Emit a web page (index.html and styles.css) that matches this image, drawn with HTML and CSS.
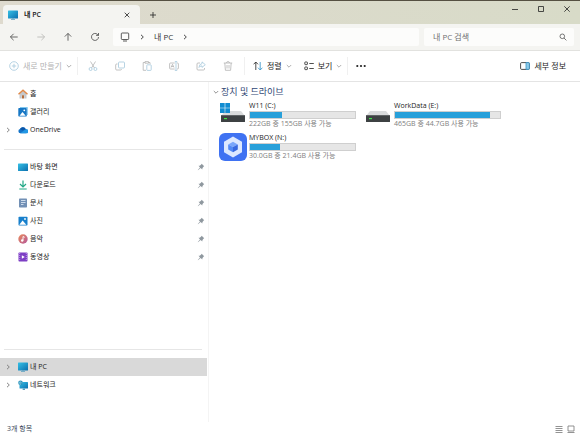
FILE: index.html
```html
<!DOCTYPE html>
<html lang="ko">
<head>
    <meta charset="UTF-8">
    <meta name="viewport" content="width=device-width, initial-scale=1.0">
    <title>내 PC</title>
    <link rel="stylesheet" href="styles.css">
</head>
<body>
    <!-- 공용 아이콘 -->
    <svg class="defs" width="0" height="0" aria-hidden="true">
        <defs>
            <linearGradient id="blue" x1="0" y1="0" x2="1" y2="1">
                <stop offset="0" stop-color="#35c1e6"/>
                <stop offset="1" stop-color="#0b6fae"/>
            </linearGradient>
            <linearGradient id="music" x1="0" y1="0" x2="1" y2="1">
                <stop offset="0" stop-color="#e98a5a"/>
                <stop offset="1" stop-color="#b5589c"/>
            </linearGradient>
            <symbol id="pc" viewBox="0 0 10 10">
                <rect x="0" y="0.500" width="10" height="8" rx="0.600" fill="url(#blue)"/>
                <path d="M4 8.500h2v.5h1v.7H3V9h1z" fill="#5a9fbe"/>
            </symbol>
            <symbol id="right" viewBox="0 0 6 6">
                <path d="M2 .8 4.300 3 2 5.200" fill="none" stroke="currentColor" stroke-width="0.9"/>
            </symbol>
            <symbol id="down" viewBox="0 0 6 6">
                <path d="M.8 2 3 4.200 5.200 2" fill="none" stroke="currentColor" stroke-width="0.8"/>
            </symbol>
            <symbol id="pin" viewBox="0 0 8 8">
                <path d="M4.700.8 7.200 3.300 6.400 3.800 5.400 5.300 5.300 6.500 3.600 5 1 7.300.8 7 3 4.400 1.500 2.800 2.800 2.700 4.200 1.600z" fill="#8f989f"/>
            </symbol>
            <symbol id="drive" viewBox="0 0 26 20">
                <path d="M5 8h16l4 5H1z" fill="#d9dbdc"/>
                <rect x="1" y="12" width="24" height="7" rx="0.5" fill="#3d4143"/>
                <rect x="1" y="12" width="24" height="1" fill="#606466"/>
                <rect x="4" y="15" width="3" height="1.200" fill="#3fe04a"/>
            </symbol>
        </defs>
    </svg>

    <div class="window">
        <!-- 제목 표시줄 -->
        <header class="titlebar">
            <div class="tab">
                <svg class="icon"><use href="#pc"/></svg>
                <span class="tab-title">내 PC</span>
                <button class="tab-close" aria-label="탭 닫기"><svg width="6" height="6" viewBox="0 0 6 6"><path d="M.7.7l4.600 4.600M5.300.7.7 5.300"/></svg></button>
            </div>
            <button class="new-tab" aria-label="새 탭"><svg width="6" height="6" viewBox="0 0 6 6"><path d="M3 0v6M0 3h6"/></svg></button>
            <div class="controls">
                <button aria-label="최소화"><svg width="6" height="6" viewBox="0 0 6 6"><path d="M0 3.500h6"/></svg></button>
                <button aria-label="최대화"><svg width="6" height="6" viewBox="0 0 6 6"><path d="M.5.5h5v5h-5z"/></svg></button>
                <button aria-label="닫기"><svg width="6" height="6" viewBox="0 0 6 6"><path d="M.3.3l5.400 5.400M5.700.3.3 5.700"/></svg></button>
            </div>
        </header>

        <!-- 주소 표시줄 -->
        <div class="navbar">
            <button class="nav-button" aria-label="뒤로"><svg width="10" height="10" viewBox="0 0 10 10"><path d="M8.700 5H1.500M4.600 1.800 1.400 5l3.200 3.200"/></svg></button>
            <button class="nav-button" aria-label="앞으로" disabled><svg width="10" height="10" viewBox="0 0 10 10"><path d="M1.300 5h7.200M5.400 1.800 8.600 5 5.400 8.200"/></svg></button>
            <button class="nav-button" aria-label="위로"><svg width="10" height="10" viewBox="0 0 10 10"><path d="M5 8.700V1.500M1.800 4.600 5 1.400l3.200 3.200"/></svg></button>
            <button class="nav-button" aria-label="새로 고침"><svg width="10" height="10" viewBox="0 0 10 10"><path d="M8.500 5A3.500 3.500 0 1 1 7.300 2.300L8.400 3.300M8.500 1v2.400H6.100"/></svg></button>
            <div class="address">
                <svg width="10" height="10" viewBox="0 0 10 10"><rect x="1.300" y="1" width="7.400" height="6.500" rx="0.800"/><path d="M3 9h4"/></svg>
                <svg class="chevron"><use href="#right"/></svg>
                <a href="#">내 PC</a>
                <svg class="chevron"><use href="#right"/></svg>
            </div>
            <div class="search">
                <input type="text" placeholder="내 PC 검색" aria-label="내 PC 검색">
                <svg width="8" height="8" viewBox="0 0 8 8"><circle cx="3.300" cy="3.300" r="2.300"/><path d="M5 5l2.400 2.400"/></svg>
            </div>
        </div>

        <!-- 명령 모음 -->
        <div class="toolbar">
            <button class="command create" disabled>
                <svg width="10" height="10" viewBox="0 0 10 10"><g class="accent"><circle cx="5" cy="5" r="4.300"/><path d="M5 2.800v4.400M2.800 5h4.400"/></g></svg>
                새로 만들기
                <svg class="chevron"><use href="#down"/></svg>
            </button>
            <span class="divider"></span>
            <div class="tools">
                <button disabled aria-label="잘라내기"><svg width="10" height="10" viewBox="0 0 10 10"><path d="M2.500.5 6.500 7M7.500.5 3.500 7"/><g class="accent"><circle cx="2.600" cy="8" r="1.500"/><circle cx="7.400" cy="8" r="1.500"/></g></svg></button>
                <button disabled aria-label="복사"><svg width="10" height="10" viewBox="0 0 10 10"><rect class="accent" x="3.500" y="1" width="6" height="6" rx="1"/><path d="M2.500 3H1.600Q.7 3 .7 4v4q0 1 1 1h3.800q1 0 1-1"/></svg></button>
                <button disabled aria-label="붙여넣기"><svg width="10" height="10" viewBox="0 0 10 10"><path d="M3 1.500H1.200V9.300H4M6.500 1.500h1.500V3M3 .6h3.500v1.600H3z"/><rect class="accent" x="4.800" y="3.800" width="4.400" height="5.600" rx="0.6"/></svg></button>
                <button disabled aria-label="이름 바꾸기"><svg width="10" height="10" viewBox="0 0 10 10"><path d="M5.700 2H1.500Q.6 2 .6 3v4q0 1 .9 1h4.200M8 2h.5q.9 0 .9 1v4q0 1-.9 1H8M2 6.500 3.500 3.300 5 6.500M2.500 5.500h2"/><path class="accent" d="M7 .6v8.800M5.800.6h2.400M5.800 9.400h2.400"/></svg></button>
                <button disabled aria-label="공유"><svg width="10" height="10" viewBox="0 0 10 10"><path d="M4 2H2Q1 2 1 3v5q0 1 1 1h5.500q1 0 1-1V7"/><path class="accent" d="M6 .9 9.300 3.700 6 6.400V4.900Q4 4.800 3 6.500 3.200 2.900 6 2.600z"/></svg></button>
                <button disabled aria-label="삭제"><svg width="10" height="10" viewBox="0 0 10 10"><path d="M.8 2h8.400M3.500 2q0-1.400 1.500-1.400T6.500 2M1.800 2l.6 7.300h5.200L8.200 2M4 4v3.500M6 4v3.500"/></svg></button>
            </div>
            <span class="divider"></span>
            <button class="command sort">
                <svg width="10" height="10" viewBox="0 0 10 10"><path d="M2.800 9V1.200M.6 3.300 2.800 1 5 3.300"/><path class="accent" d="M7.200 1v7.800M5 6.700 7.200 9 9.400 6.700"/></svg>
                정렬
                <svg class="chevron"><use href="#down"/></svg>
            </button>
            <button class="command view">
                <svg width="10" height="10" viewBox="0 0 10 10"><rect x="0.800" y="1" width="2.600" height="2.600" rx="0.500"/><rect x="0.800" y="6" width="2.600" height="2.600" rx="0.500"/><path d="M5.300 2.500h4.500M5.300 7.500h4.500"/></svg>
                보기
                <svg class="chevron"><use href="#down"/></svg>
            </button>
            <span class="divider"></span>
            <button class="more" aria-label="자세히"><svg width="10" height="10" viewBox="0 0 10 10"><g class="dots"><circle cx="1.300" cy="5" r="1.100"/><circle cx="5" cy="5" r="1.100"/><circle cx="8.700" cy="5" r="1.100"/></g></svg></button>
            <button class="command details">
                <svg width="10" height="10" viewBox="0 0 10 10"><rect x="0.600" y="1.600" width="8.800" height="6.800" rx="1"/><path d="M6 1.600h2.400q1 0 1 1v4.800q0 1-1 1H6z" class="pane"/></svg>
                세부 정보
            </button>
        </div>

        <div class="body">
            <!-- 탐색 창 -->
            <nav class="sidebar">
                <a class="place" href="#">
                    <svg class="icon" viewBox="0 0 10 10"><path d="M1.500 4.500 5 1.600l3.500 2.900V9.500H6.200V6.500H3.800v3H1.500z" fill="#c5c8cc"/><path d="M.5 5.300 5 1.200l4.500 4.100" fill="none" stroke="#e08a4a" stroke-width="1.400"/><path d="M4 6.300h2v3.200H4z" fill="#b56f3f"/></svg>
                    <span>홈</span>
                </a>
                <a class="place" href="#">
                    <svg class="icon" viewBox="0 0 10 10"><path d="M2 .5h7.200q.5 0 .5.5v7" fill="none" stroke="#5fb7ea"/><rect x="0.300" y="1" width="8.500" height="8.500" rx="0.800" fill="#1677c5"/><path d="M1.500 8.800 4.500 5l3.200 3.800z" fill="#fff"/><circle cx="6.300" cy="3.300" r="0.900" fill="#fff"/></svg>
                    <span>갤러리</span>
                </a>
                <a class="place" href="#">
                    <svg class="chevron"><use href="#right"/></svg>
                    <svg class="icon" viewBox="0 0 10 10"><path d="M2.300 8.300A2.200 2.200 0 0 1 2 4 3.200 3.200 0 0 1 7.800 4.300 2 2 0 0 1 8 8.300z" fill="#1473c8"/><path d="M2.300 8.300 7 4.700a2.100 2.100 0 1 1 1 3.600z" fill="#2397e4"/><path d="M2 4a3.200 3.200 0 0 1 5.800.3L4.500 5.500z" fill="#0b56a8"/></svg>
                    <span>OneDrive</span>
                </a>
                <hr>
                <a class="place" href="#">
                    <svg class="icon" viewBox="0 0 10 10"><rect x="0" y="1.500" width="10" height="7.500" rx="0.600" fill="url(#blue)"/></svg>
                    <span>바탕 화면</span>
                    <svg class="pin"><use href="#pin"/></svg>
                </a>
                <a class="place" href="#">
                    <svg class="icon" viewBox="0 0 10 10"><path d="M5 .5v6.300M2 4l3 3 3-3M1.300 9h7.400" fill="none" stroke="#22a886" stroke-width="1.200"/></svg>
                    <span>다운로드</span>
                    <svg class="pin"><use href="#pin"/></svg>
                </a>
                <a class="place" href="#">
                    <svg class="icon" viewBox="0 0 10 10"><rect x="1" y="0.500" width="8" height="9" rx="0.700" fill="#7290b5"/><path d="M3 2.500h4.500M3 4.500h4.500M3 6.500h2.500" stroke="#e4edf7" stroke-width="0.800"/></svg>
                    <span>문서</span>
                    <svg class="pin"><use href="#pin"/></svg>
                </a>
                <a class="place" href="#">
                    <svg class="icon" viewBox="0 0 10 10"><rect x="0.500" y="0.700" width="9" height="8.800" rx="0.800" fill="#1880cc"/><path d="M1.300 8.700 4.600 4.500 8.300 8.700z" fill="#fff"/><circle cx="7" cy="3" r="0.900" fill="#fff"/></svg>
                    <span>사진</span>
                    <svg class="pin"><use href="#pin"/></svg>
                </a>
                <a class="place" href="#">
                    <svg class="icon" viewBox="0 0 10 10"><circle cx="5" cy="5" r="4.700" fill="url(#music)"/><circle cx="4.200" cy="6.500" r="1.200" fill="#fff"/><path d="M5 6.500V2.500l1.700.8" fill="none" stroke="#fff" stroke-width="0.900"/></svg>
                    <span>음악</span>
                    <svg class="pin"><use href="#pin"/></svg>
                </a>
                <a class="place" href="#">
                    <svg class="icon" viewBox="0 0 10 10"><rect x="0.500" y="0.500" width="9" height="9" rx="0.800" fill="#7d3fc4"/><path d="M1.700 1v8M8.300 1v8" stroke="#c59df0" stroke-width="0.900" stroke-dasharray="1 1"/><path d="M3.800 3.200v3.600L6.800 5z" fill="#fff"/></svg>
                    <span>동영상</span>
                    <svg class="pin"><use href="#pin"/></svg>
                </a>
                <hr class="last">
                <a class="place selected" href="#">
                    <svg class="chevron"><use href="#right"/></svg>
                    <svg class="icon"><use href="#pc"/></svg>
                    <span>내 PC</span>
                </a>
                <a class="place" href="#">
                    <svg class="chevron"><use href="#right"/></svg>
                    <svg class="icon" viewBox="0 0 10 10"><rect x="1.500" y="2" width="8.500" height="6.500" rx="0.500" fill="url(#blue)"/><path d="M5 8.500h2V10H4.500z" fill="#5a9fbe"/><circle cx="2.500" cy="2.800" r="2.300" fill="#2b91b9"/><path d="M.5 2.800h4M2.500.6q-1.500 2.200 0 4.400" fill="none" stroke="#a9def0" stroke-width="0.500"/></svg>
                    <span>네트워크</span>
                </a>
            </nav>

            <!-- 드라이브 목록 -->
            <main class="content">
                <h2><svg class="chevron"><use href="#down"/></svg>장치 및 드라이브</h2>
                <div class="drives">
                    <div class="drive">
                        <svg class="drive-icon" viewBox="0 0 26 20"><use href="#drive"/><path d="M0 0h4.700v4.700H0zM5.300 0H10v4.700H5.300zM0 5.300h4.700V10H0zM5.300 5.300H10V10H5.300z" fill="#118cd2"/></svg>
                        <div class="drive-info">
                            <div class="drive-name">W11 (C:)</div>
                            <div class="bar"><div class="bar-fill" style="width: 30%"></div></div>
                            <div class="drive-space">222GB 중 155GB 사용 가능</div>
                        </div>
                    </div>
                    <div class="drive">
                        <svg class="drive-icon" viewBox="0 0 26 20"><use href="#drive"/></svg>
                        <div class="drive-info">
                            <div class="drive-name">WorkData (E:)</div>
                            <div class="bar"><div class="bar-fill" style="width: 90%"></div></div>
                            <div class="drive-space">465GB 중 44.7GB 사용 가능</div>
                        </div>
                    </div>
                    <div class="drive">
                        <svg class="drive-icon mybox" viewBox="0 0 28 28"><rect width="28" height="28" rx="6" fill="#3f72f2"/><path d="M14 3.500 23 8.700v10.600l-9 5.200-9-5.200V8.700z" fill="#dce8ff"/><path d="M14 8.800l4.800 2.600L14 14l-4.800-2.600z" fill="#79a6fb"/><path d="M9.200 11.400 14 14v5.300l-4.800-2.700z" fill="#5289f5"/><path d="M18.800 11.400 14 14v5.300l4.800-2.700z" fill="#3768df"/></svg>
                        <div class="drive-info">
                            <div class="drive-name">MYBOX (N:)</div>
                            <div class="bar"><div class="bar-fill" style="width: 29%"></div></div>
                            <div class="drive-space">30.0GB 중 21.4GB 사용 가능</div>
                        </div>
                    </div>
                </div>
            </main>
        </div>

        <!-- 상태 표시줄 -->
        <footer class="statusbar">
            <span>3개 항목</span>
            <div class="layouts">
                <button aria-label="자세히 보기"><svg width="8" height="8" viewBox="0 0 8 8"><path d="M.5 1.500h7M.5 3.500h7M.5 5.500h7M.5 7.500h7"/></svg></button>
                <button aria-label="큰 아이콘"><svg width="8" height="8" viewBox="0 0 8 8"><path d="M1 1h6v5H1zM.5 7.500h7"/></svg></button>
            </div>
        </footer>
    </div>
</body>
</html>
```
FILE: styles.css
```css
/* 전체 스타일 */
* {
    box-sizing: border-box;
}

body {
    margin: 0;
    font-family: "Open Sans", "Noto Sans CJK KR", sans-serif;
    font-size: 7px;
    line-height: 10px;
    color: #222;
    background-color: #fff;
}

button {
    display: flex;
    align-items: center;
    justify-content: center;
    padding: 0;
    border: none;
    background: none;
    font: inherit;
    color: inherit;
}

a {
    color: inherit;
    text-decoration: none;
}

svg {
    flex: none;
    fill: none;
    stroke: currentColor;
    stroke-width: 0.8;
}

symbol, .icon, .drive-icon, .pin {
    stroke: none;
}

.defs {
    position: absolute;
}

.icon {
    width: 10px;
    height: 10px;
}

.chevron {
    width: 6px;
    height: 6px;
}

.window {
    display: flex;
    flex-direction: column;
    min-height: 100vh;
}

/* 제목 표시줄 */
.titlebar {
    display: flex;
    height: 24px;
    border-top: 1px solid #555042;
    background: linear-gradient(to right, #dedace, #d8dbc8);
}

.tab {
    display: flex;
    align-items: center;
    width: 137px;
    margin: 4px 0 0 3px;
    padding: 0 9px 0 5px;
    border-radius: 4px 4px 0 0;
    background-color: #f4f4f1;
}

.tab-title {
    flex: 1;
    margin-left: 6px;
    font-weight: 600;
}

.tab-close {
    width: 8px;
    height: 8px;
}

.new-tab {
    width: 25px;
    padding-top: 4px;
}

.controls {
    display: flex;
    height: 16px;
    margin-left: auto;
}

.controls button {
    width: 26px;
}

/* 주소 표시줄 */
.navbar {
    display: flex;
    align-items: center;
    height: 27px;
    padding: 0 6px 0 0;
    border-bottom: 1px solid #e2e2df;
    background-color: #f4f4f1;
    font-size: 8px;
}

.nav-button {
    width: 27px;
    height: 18px;
    color: #444;
}

.nav-button:disabled {
    color: #b5b5b3;
}

.address, .search {
    display: flex;
    align-items: center;
    height: 18px;
    border-radius: 2px;
    background-color: #fcfcfb;
}

.address {
    flex: 1;
    gap: 9px;
    margin: 0 5px;
    padding-left: 7px;
    color: #333;
}

.search {
    width: 150px;
    padding: 0 7px 0 9px;
    color: #555;
}

.search input {
    flex: 1;
    min-width: 0;
    padding: 0;
    border: none;
    outline: none;
    background: none;
    font: inherit;
}

.search input::placeholder {
    color: #707070;
}

/* 명령 모음 */
.toolbar {
    display: flex;
    align-items: center;
    height: 31px;
    padding: 0 14px 0 9px;
    border-bottom: 1px solid #e4e4e4;
    font-size: 8px;
}

.command {
    gap: 4px;
    height: 18px;
}

.command .chevron {
    color: #999;
}

.create {
    margin-right: 5px;
}

.toolbar button:disabled {
    color: #b2b2b2;
}

.accent {
    stroke: #2f8fc8;
}

button:disabled .accent {
    stroke: #a5c8dc;
}

.divider {
    width: 1px;
    height: 18px;
    background-color: #f0f0f0;
}

.tools {
    display: flex;
    margin: 0 2px;
}

.tools button {
    width: 27px;
    height: 18px;
}

.sort {
    margin: 0 12px 0 8px;
}

.view {
    margin-right: 5px;
}

.more {
    margin-left: 8px;
}

.dots {
    fill: #222;
    stroke: none;
}

.details {
    margin-left: auto;
}

.pane {
    fill: #8ccbea;
    stroke: #3b94c4;
}

/* 탐색 창 */
.body {
    display: flex;
    flex: 1;
}

.sidebar {
    display: flex;
    flex-direction: column;
    width: 209px;
    padding: 3px 1px 28px 0;
    border-right: 1px solid #f4f4f4;
}

.place {
    display: grid;
    grid-template-columns: 11px 10px 1fr 8px;
    align-items: center;
    column-gap: 2px;
    height: 18px;
    padding: 0 2px 0 5px;
}

.place .chevron {
    grid-column: 1;
    color: #777;
}

.place .icon {
    grid-column: 2;
}

.place .pin {
    width: 8px;
    height: 8px;
}

.place.selected {
    background-color: #d9d9d9;
}

.sidebar hr {
    width: 198px;
    height: 1px;
    margin: 10px 4px 8px;
    border: none;
    background-color: #e6e6e6;
}

.sidebar .last {
    margin-top: auto;
}

/* 드라이브 목록 */
.content {
    flex: 1;
    padding: 5px 4px;
}

.content h2 {
    display: flex;
    align-items: center;
    gap: 2px;
    margin: 0 0 4px;
    font-size: 9px;
    font-weight: 400;
    color: #2f4674;
}

.content h2 .chevron {
    color: #777;
}

.drives {
    display: grid;
    grid-template-columns: repeat(auto-fill, 137px);
    gap: 4px 8px;
    padding-left: 6px;
}

.drive {
    display: flex;
    align-items: flex-start;
    gap: 2px;
    height: 28px;
}

.drive-icon {
    width: 28px;
    height: 20px;
    margin-top: 2px;
}

.mybox {
    height: 28px;
    margin-top: 0;
}

.drive-info {
    flex: 1;
}

.bar {
    height: 8px;
    border: 1px solid #cfcfcf;
    background-color: #e6e6e6;
}

.bar-fill {
    height: 100%;
    background-color: #28a0da;
}

.drive-space {
    color: #808080;
}

/* 상태 표시줄 */
.statusbar {
    display: flex;
    align-items: center;
    justify-content: space-between;
    height: 13px;
    padding: 0 5px 0 7px;
    color: #3c4a5c;
}

.layouts {
    display: flex;
    gap: 4px;
    color: #777;
}
```
